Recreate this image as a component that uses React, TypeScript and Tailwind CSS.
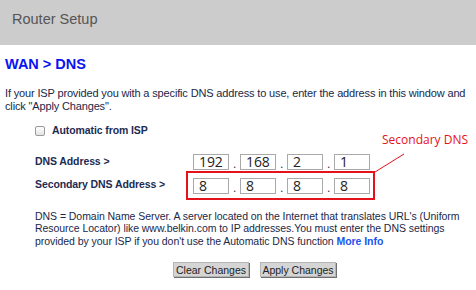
const ip1 = ["192", "168", "2", "1"];
const ip2 = ["8", "8", "8", "8"];

function IpFields({ parts }: { parts: string[] }) {
  return (
    <div className="flex items-end">
      {parts.map((p, i) => (
        <div key={i} className="flex items-end">
          {i > 0 && <span className="w-[11px] text-center text-[12px] leading-[12px] text-[#333]">.</span>}
          <div className="flex h-[16px] w-[36px] items-center border border-[#a9a9a9] bg-white pl-[5px] font-['Open_Sans',sans-serif] text-[14px] leading-none text-[#222]">
            {p}
          </div>
        </div>
      ))}
    </div>
  );
}

export default function App() {
  return (
    <div className="h-[290px] w-[476px] overflow-hidden bg-white font-['Liberation_Sans',Arial,sans-serif]">
      <div className="flex h-[45px] items-center bg-[#cccccc] pl-[12px] pb-[6px] text-[14.5px] text-[#555]">
        Router Setup
      </div>

      <div className="px-[5px]">
        <h1 className="mt-[10px] text-[14.5px] font-bold leading-[18px] text-[#0a14f0]">WAN &gt; DNS</h1>
        <p className="mt-[14px] w-[462px] text-[11px] leading-[13px] tracking-[-0.15px] text-[#1b2747]">
          If your ISP provided you with a specific DNS address to use, enter the address in this window and click
          "Apply Changes".
        </p>
      </div>

      <div className="pl-[35px] text-[10.5px] tracking-[-0.1px] text-[#1c2b52]">
        <label className="mt-[10px] flex items-center gap-[7px] font-bold">
          <span className="h-[10px] w-[10px] rounded-[2px] border border-[#9a9a9a] bg-gradient-to-b from-white to-[#e4e4e4]" />
          Automatic from ISP
        </label>

        <div className="mt-[15px] flex items-center">
          <span className="w-[158px] font-bold">DNS Address &gt;</span>
          <IpFields parts={ip1} />
        </div>

        <div className="mt-[1px] flex items-center">
          <span className="w-[151px] font-bold">Secondary DNS Address &gt;</span>
          <div className="relative border-2 border-[#e3121b] pb-[4px] pl-[5px] pr-[3px] pt-[5px]">
            <IpFields parts={ip2} />
            <svg className="absolute left-[186px] top-[-21px] overflow-visible" width="32" height="22">
              <line x1="1" y1="20" x2="30" y2="2" stroke="#e3121b" strokeWidth="1" />
            </svg>
            <span className="absolute left-[194px] top-[-42px] whitespace-nowrap font-['Open_Sans',sans-serif] text-[12px] tracking-normal text-[#e3121b]">
              Secondary DNS
            </span>
          </div>
        </div>

        <p className="mt-[10px] pr-[10px] leading-[12.5px] tracking-[-0.05px] text-[#1b2747]">
          DNS = Domain Name Server. A server located on the Internet that translates URL's (Uniform Resource Locator)
          like www.belkin.com to IP addresses.You must enter the DNS settings provided by your ISP if you don't use the
          Automatic DNS function <span className="font-bold text-[#1a55f0]">More Info</span>
        </p>
      </div>

      <div className="mt-[15px] flex justify-center gap-[11px] pl-[33px]">
        <button className="h-[15px] w-[76px] border border-[#b5b5b5] bg-[#d5d5d5] text-[10.5px] leading-none text-[#222] shadow-[1px_1px_0_#6f6f6f]">
          Clear Changes
        </button>
        <button className="h-[15px] w-[76px] border border-[#b5b5b5] bg-[#d5d5d5] text-[10.5px] leading-none text-[#222] shadow-[1px_1px_0_#6f6f6f]">
          Apply Changes
        </button>
      </div>
    </div>
  );
}
